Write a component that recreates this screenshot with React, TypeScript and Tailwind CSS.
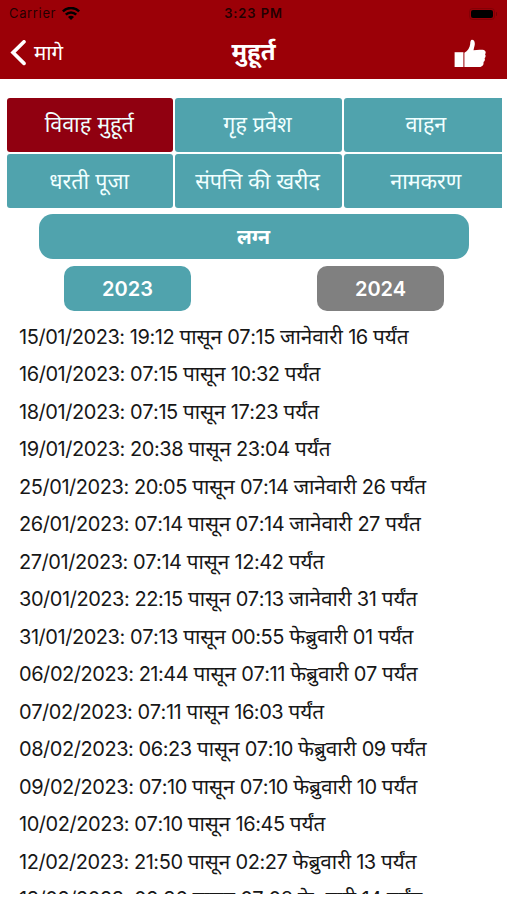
interface Muhurat {
  date: string;
  from: string;
  to: string;
  month?: string;
  day?: string;
}

const categories = [
  "विवाह मुहूर्त",
  "गृह प्रवेश",
  "वाहन",
  "धरती पूजा",
  "संपत्ति की खरीद",
  "नामकरण",
];

const muhurats: Muhurat[] = [
  { date: "15/01/2023", from: "19:12", to: "07:15", month: "जानेवारी", day: "16" },
  { date: "16/01/2023", from: "07:15", to: "10:32" },
  { date: "18/01/2023", from: "07:15", to: "17:23" },
  { date: "19/01/2023", from: "20:38", to: "23:04" },
  { date: "25/01/2023", from: "20:05", to: "07:14", month: "जानेवारी", day: "26" },
  { date: "26/01/2023", from: "07:14", to: "07:14", month: "जानेवारी", day: "27" },
  { date: "27/01/2023", from: "07:14", to: "12:42" },
  { date: "30/01/2023", from: "22:15", to: "07:13", month: "जानेवारी", day: "31" },
  { date: "31/01/2023", from: "07:13", to: "00:55", month: "फेब्रुवारी", day: "01" },
  { date: "06/02/2023", from: "21:44", to: "07:11", month: "फेब्रुवारी", day: "07" },
  { date: "07/02/2023", from: "07:11", to: "16:03" },
  { date: "08/02/2023", from: "06:23", to: "07:10", month: "फेब्रुवारी", day: "09" },
  { date: "09/02/2023", from: "07:10", to: "07:10", month: "फेब्रुवारी", day: "10" },
  { date: "10/02/2023", from: "07:10", to: "16:45" },
  { date: "12/02/2023", from: "21:50", to: "02:27", month: "फेब्रुवारी", day: "13" },
  { date: "13/02/2023", from: "02:36", to: "07:08", month: "फेब्रुवारी", day: "14" },
];

function StatusBar() {
  return (
    <div className="grid h-[27px] grid-cols-3 items-center px-[9px] text-[13px] text-black/80">
      <div className="flex items-center gap-[6px]">
        <span className="tracking-[0.65px]">Carrier</span>
        <svg width="18" height="14" viewBox="0 0 18 14" fill="none" stroke="black" strokeWidth="2.5">
          <path d="M.8 4.4a11.6 11.6 0 0 1 16.4 0" />
          <path d="M3.8 7.6a7.3 7.3 0 0 1 10.4 0" />
          <path d="M6 9.9a4.2 4.2 0 0 1 6 0L9 12.9z" fill="black" stroke="none" />
        </svg>
      </div>
      <span className="text-center font-semibold tracking-[0.9px]">3:23 PM</span>
      <div className="flex items-center justify-end gap-px pr-px">
        <div className="h-[12px] w-[26px] rounded-[3.5px] border border-black/15 p-px">
          <div className="h-full rounded-[2px] bg-black" />
        </div>
        <div className="h-1 w-[1.5px] rounded-r bg-black/25" />
      </div>
    </div>
  );
}

function Header() {
  return (
    <header className="h-[79px] bg-[#9b0007]">
      <StatusBar />
      <div className="grid h-[52px] grid-cols-3 items-center pr-[21px] pl-[10px] text-white">
        <button className="flex items-center gap-[7px] text-left">
          <svg width="17" height="26" viewBox="0 0 17 26" fill="none" stroke="white" strokeWidth="3.6" strokeLinecap="round">
            <path d="M14 1.8L3 12.6l11 10.8" />
          </svg>
          <span className="pb-px text-[20.5px] leading-[26px]">मागे</span>
        </button>
        <h1 className="pb-[2px] pl-[11px] text-center text-[24px] leading-8 font-bold">मुहूर्त</h1>
        <button className="flex justify-end">
          <svg width="32" height="28" viewBox="0 0 32 28" fill="white">
            <path d="M.6 13.2H9.4V28H.6z" />
            <path d="M10.4 13.7c3.2-1.4 5.4-4.7 5.8-8.6.1-2.7.5-4.3 1.8-4.3 2.3 0 3.4 2.8 2.5 6.2-.4 1.7-.8 3-1 4.2 3.1-.5 6.2-.7 9-.4 3.4.3 3.8 3 2.5 4.5 1 1.3.7 3-.4 4 .7 1.5.1 3-1.1 3.8.4 2.6-.7 4.3-3.1 4.9H10.4z" />
          </svg>
        </button>
      </div>
    </header>
  );
}

function CategoryTabs() {
  return (
    <div className="mr-[5px] ml-[7px] overflow-hidden">
      <div className="grid w-[503px] grid-cols-3 gap-[2px]">
        {categories.map((name, i) => (
          <button
            key={name}
            className={`h-[54px] rounded-[3px] pr-[2px] text-[21.5px] text-[#f0ffff] ${
              i === 0 ? "bg-[#900010]" : "bg-[#50a3ad]"
            } ${i < 3 ? "pb-[1px]" : ""}`}
          >
            {name}
          </button>
        ))}
      </div>
    </div>
  );
}

function Word({ children }: { children: string }) {
  return <span className="text-[20.7px] tracking-normal">{children}</span>;
}

function MuhuratRow({ item }: { item: Muhurat }) {
  return (
    <li className="h-[37.5px] leading-[37.5px] tracking-[-0.45px] whitespace-nowrap [font-kerning:none]">
      {item.date}: {item.from} <Word>पासून</Word> {item.to}{" "}
      {item.month && (
        <>
          <Word>{item.month}</Word> {item.day}{" "}
        </>
      )}
      <Word>पर्यंत</Word>
    </li>
  );
}

export default function App() {
  return (
    <div className="h-[900px] w-[507px] overflow-hidden bg-white font-['Inter','Noto_Sans',sans-serif]">
      <Header />
      <main className="pt-[19px]">
        <CategoryTabs />
        <div className="mx-auto mt-[6px] flex h-[45px] w-[430px] items-center justify-center rounded-[14px] bg-[#50a3ad] text-[20px] font-bold text-white">
          लग्न
        </div>
        <div className="mt-[7px] grid grid-cols-2 justify-items-center pl-px text-[20px] font-semibold text-white">
          <button className="h-[45px] w-[127px] rounded-[10px] bg-[#50a3ad]">2023</button>
          <button className="h-[45px] w-[127px] rounded-[10px] bg-[#808080]">2024</button>
        </div>
        <ul className="mt-[6.5px] h-[576px] overflow-hidden pl-[19px] text-[20px] text-[#171717]">
          {muhurats.map((item) => (
            <MuhuratRow key={item.date} item={item} />
          ))}
        </ul>
      </main>
    </div>
  );
}
